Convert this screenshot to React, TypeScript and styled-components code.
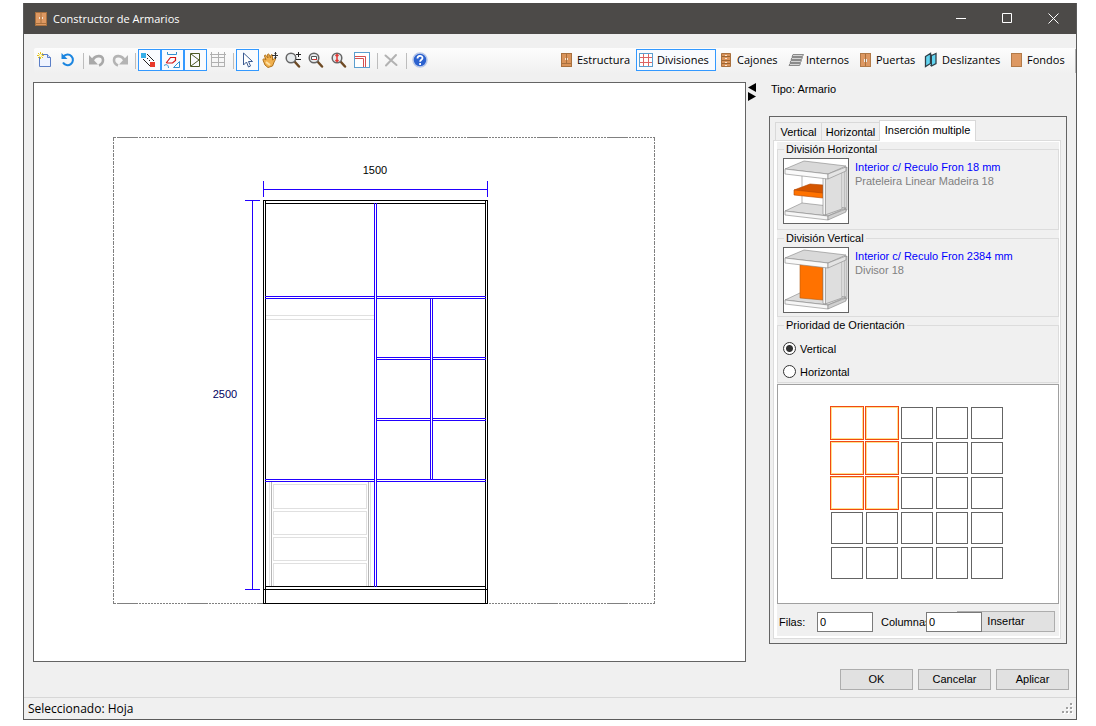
import React, { useState } from "react";
import styled, { createGlobalStyle, css } from "styled-components";

const uiFont = `"Open Sans", "Noto Sans", sans-serif`;
const formFont = `"Liberation Sans", Arial, sans-serif`;

const GlobalStyle = createGlobalStyle`
  *, *::before, *::after { box-sizing: border-box; }
  body { margin: 0; background: #fff; color: #000; font: 11px/14px ${formFont}; }
  button, input { font: inherit; color: inherit; margin: 0; }
`;

const Page = styled.div`
  display: flex;
  min-height: 100vh;
  padding: 3px 19px 6px 23px;
`;

const Window = styled.main`
  display: flex;
  flex: 1;
  flex-direction: column;
  min-width: 0;
  border: 1px solid #5b5b5b;
  border-top: 0;
  background: #f0f0f0;
`;

const TitleBar = styled.header`
  display: flex;
  align-items: center;
  height: 31px;
  padding-left: 11px;
  background: #4c4a48;
  color: #fff;
`;

const Title = styled.h1`
  flex: 1;
  margin: 0 0 0 6px;
  font: 400 11px/16px ${uiFont};
`;

const CaptionButton = styled.button`
  display: flex;
  align-items: center;
  justify-content: center;
  width: 46px;
  height: 31px;
  padding: 0;
  border: 0;
  background: transparent;
`;

const ToolStrip = styled.div`
  display: flex;
  justify-content: space-between;
  height: 25px;
  margin: 14px 0 9px 10px;
  padding-top: 1px;
  border-radius: 2px;
  background: linear-gradient(#fdfdfd, #f0f0f0);
`;

const ToolGroup = styled.div<{ $end?: boolean }>`
  display: flex;
  padding-right: ${(p) => (p.$end ? "3px" : "0")};
  border-right: ${(p) => (p.$end ? "1px solid #b4b4b4" : "0")};
`;

const ToolButton = styled.button<{ $active?: boolean; $width?: number }>`
  display: flex;
  align-items: center;
  gap: 2px;
  width: ${(p) => p.$width ?? 23}px;
  height: 22px;
  padding: 0 0 0 2px;
  border: 1px solid ${(p) => (p.$active ? "#3399ff" : "transparent")};
  background: ${(p) => (p.$active ? "#f9fbfe" : "transparent")};
  font: 400 11px/16px ${uiFont};
  white-space: nowrap;
  svg { flex: none; }
`;

const Separator = styled.span`
  width: 6px;
  height: 16px;
  margin-top: 4px;
  background: linear-gradient(#bdbdbd, #bdbdbd) 3px 0 / 1px 100% no-repeat;
`;

const Workspace = styled.div`
  display: grid;
  grid-template-columns: minmax(0, 1fr) 23px 298px;
  align-items: start;
  padding: 0 9px;
`;

const Canvas = styled.section`
  border: 1px solid #646464;
  background: #fff;
  svg { display: block; width: 100%; height: auto; }
`;

const Collapser = styled.div`
  display: flex;
  flex-direction: column;
  align-items: flex-start;
  padding: 1px 0 0 2px;
`;

const ArrowButton = styled.button`
  display: block;
  width: 9px;
  height: 9px;
  padding: 0;
  border: 0;
  background: transparent;
  svg { display: block; }
`;

const TypeLine = styled.p`
  height: 34px;
  margin: 0;
  padding-left: 2px;
`;

const Panel = styled.section`
  padding: 3px 5px 4px 3px;
  border: 1px solid #646464;
`;

const TabList = styled.div`
  display: flex;
  align-items: flex-end;
  padding-left: 2px;
`;

const Tab = styled.button<{ $active?: boolean; $width: number }>`
  width: ${(p) => p.$width}px;
  height: 18px;
  padding: 0;
  border: 1px solid #d9d9d9;
  border-right-width: 0;
  border-bottom: 0;
  background: #f0f0f0;
  white-space: nowrap;
  ${(p) =>
    p.$active &&
    css`
      z-index: 1;
      height: 21px;
      margin-bottom: -1px;
      padding: 0 0 2px;
      border-right-width: 1px;
      background: #fff;
    `}
`;

const TabPage = styled.div`
  padding: 1px 1px 2px 3px;
  border: 1px solid #dcdcdc;
  background: #fff;
`;

const TabContent = styled.div`
  display: flex;
  flex-direction: column;
  gap: 1px;
  background: #f0f0f0;
`;

const Group = styled.fieldset<{ $height: number }>`
  min-width: 0;
  height: ${(p) => p.$height}px;
  margin: 0;
  padding: 0 5px;
  border: 1px solid #dcdcdc;
  legend {
    height: 14px;
    margin-left: 1px;
    padding: 0 2px;
  }
`;

const Part = styled.div`
  display: flex;
  gap: 6px;
  padding-top: 2px;
`;

const Thumb = styled.svg`
  flex: none;
  width: 66px;
  height: 66px;
  border: 1px solid #646464;
  background: #fff;
`;

const PartText = styled.div`
  padding-top: 2px;
  white-space: nowrap;
`;

const PartName = styled.div`
  color: #0000ff;
`;

const PartModel = styled.div`
  color: #808080;
`;

const RadioLabel = styled.label`
  display: flex;
  align-items: center;
  gap: 4px;
  height: 23px;
  input {
    appearance: none;
    width: 13px;
    height: 13px;
    border: 1px solid #333;
    border-radius: 50%;
    background: #fff;
  }
  input:checked {
    background: radial-gradient(circle, #333 3px, #fff 4px);
  }
`;

const RadioStack = styled.div`
  padding-top: 5px;
`;

const Matrix = styled.div`
  display: grid;
  grid-template-columns: repeat(5, 32px);
  gap: 3px;
  justify-content: center;
  padding: 22px 2px 24px 0;
  border: 1px solid #a0a0a0;
  background: #fff;
`;

const Cell = styled.button<{ $on: boolean }>`
  height: 32px;
  padding: 0;
  border: 1px solid ${(p) => (p.$on ? "#ffe08a" : "#646464")};
  background: #fff;
  box-shadow: ${(p) => (p.$on ? "0 0 0 1px #f04a14" : "none")};
`;

const InsertRow = styled.div`
  display: flex;
  align-items: center;
  height: 31px;
  padding: 2px 0 0 2px;
`;

const FieldLabel = styled.label<{ $width: number }>`
  flex: none;
  width: ${(p) => p.$width}px;
  white-space: nowrap;
`;

const NumberBox = styled.input`
  z-index: 1;
  flex: none;
  width: 56px;
  height: 20px;
  margin-right: 8px;
  padding: 0 2px;
  border: 1px solid #7a7a7a;
  background: #fff;
  &:last-of-type { margin-right: 0; }
`;

const PushButton = styled.button<{ $insert?: boolean }>`
  width: ${(p) => (p.$insert ? 98 : 73)}px;
  height: 21px;
  margin-left: ${(p) => (p.$insert ? "-25px" : "0")};
  padding: 0 0 2px;
  border: 1px solid #adadad;
  background: #e1e1e1;
`;

const DialogButtons = styled.footer`
  display: flex;
  flex: 1;
  gap: 5px;
  align-items: flex-start;
  justify-content: flex-end;
  padding: 7px 7px;
`;

const StatusBar = styled.div`
  display: flex;
  align-items: center;
  justify-content: space-between;
  height: 22px;
  padding: 0 2px 0 4px;
  border-top: 1px solid #d7d7d7;
  font: 400 12px/16px ${uiFont};
`;

type IconProps = { children: React.ReactNode };
const Icon = ({ children }: IconProps) => (
  <svg width="16" height="16" viewBox="0 0 16 16" fill="none" aria-hidden="true">
    {children}
  </svg>
);

const NewIcon = () => (
  <Icon>
    <path d="M2.500 2.500h8l3 3v9h-11z" fill="#eff4ff" stroke="#5b7fc7" />
    <path d="M10.500 2.500v3h3" fill="#cfdcf5" stroke="#5b7fc7" />
    <path d="M3.500 0v7M0 3.500h7M1 1l5 5M6 1L1 6" stroke="#e6c419" />
    <circle cx="3.500" cy="3.500" r="1.500" fill="#fffbd0" />
  </Icon>
);

const RefreshIcon = () => (
  <Icon>
    <path d="M3.500 4.500A5.300 5.300 0 1 1 3 10.500" stroke="#1c86e0" strokeWidth="2" />
    <path d="M1.500 1v6h6z" fill="#1c86e0" />
  </Icon>
);

const UndoIcon = () => (
  <Icon>
    <path d="M3.500 8.500C5.500 3.500 14 2 14 8c0 2.500-1.500 4.500-4 5.500" stroke="#a9a9a9" strokeWidth="2.600" />
    <path d="M0 3v9.500h9z" fill="#a9a9a9" />
  </Icon>
);

const RedoIcon = () => (
  <Icon>
    <path d="M12.500 8.500C10.500 3.500 2 2 2 8c0 2.500 1.500 4.500 4 5.500" stroke="#b4b4b4" strokeWidth="2.600" />
    <path d="M16 3v9.500H7z" fill="#b4b4b4" />
  </Icon>
);

const linkDots = [0, 1, 2, 3, 4, 5, 6];
const LinkIcon = () => (
  <Icon>
    <g fill="#222" shapeRendering="crispEdges">
      {linkDots.map((i) => (
        <g key={i}>
          <rect x={6 + i} y={2 + i} width="1" height="1" />
          <rect x={2 + i} y={7 + i} width="1" height="1" />
        </g>
      ))}
      <rect x="6" y="6" width="1" height="1" />
      <rect x="8" y="8" width="1" height="1" />
    </g>
    <rect x="0" y="1" width="5" height="5" fill="#35aee8" />
    <rect x="9" y="10" width="5" height="5" fill="#e8382c" />
  </Icon>
);

const ShapesIcon = () => (
  <Icon>
    <path d="M3.500 0v2.500h9V0M0 13.500c3-2 4.500 0 4.500 2.500M9.500 15.500l6-6v6z" stroke="#2f8fd0" />
    <path d="M2.500 10.500l4-5h5v3l-3 2.500H3z" stroke="#d31414" strokeWidth="1.200" />
  </Icon>
);

const DoorIcon = () => (
  <Icon>
    <path d="M3.500 1.500h9v13h-9zM4 2l8 6-8 6" stroke="#4c5a24" />
  </Icon>
);

const TableIcon = () => (
  <Icon>
    <path d="M0 2.500h16M1.500 0v15M8.500 0v15M14.500 0v15M1 5.500h14M1 10.500h14M1 14.500h14" stroke="#b0b0b0" />
  </Icon>
);

const PointerIcon = () => (
  <Icon>
    <path d="M4.500 1v12l3-3 2 5 2-1-2-4.500h4z" fill="#fff" stroke="#3b5b92" />
  </Icon>
);

const HandIcon = () => (
  <Icon>
    <path
      d="M1 8c0-2 2-1 3 0L2.500 4c0-1.500 1.500-1 2 0L6 6 5.500 2.500C6 1.500 7 2 7.500 3L8.500 6l.500-3c1-1 2 0 1.500 1.500V8l2-1.500c1.500 0 1 1.500 0 2.500L10.500 14 6 15.500 3 13z"
      fill="#f0b04e"
      stroke="#b0721c"
    />
    <path d="M4 10l4 3" stroke="#ffe0a0" strokeWidth="2" />
    <path d="M13.500 0v7M10 3.500h6M12.500 1.500h2M12.500 5.500h2" stroke="#333" />
  </Icon>
);

const Magnifier = ({ children }: IconProps) => (
  <Icon>
    <path d="M9.500 9.500l4.500 5" stroke="#6e4a24" strokeWidth="2.500" strokeLinecap="round" />
    <circle cx="6" cy="6" r="4.800" fill="#e6eaec" stroke="#666" strokeWidth="1.500" />
    {children}
  </Icon>
);

const FrameIcon = () => (
  <Icon>
    <rect x=".500" y=".500" width="15" height="15" fill="#fff" stroke="#5b9ecf" />
    <path d="M1 4.500h10.500V15M1 6.500h8.500V15" stroke="#d65050" />
  </Icon>
);

const DeleteIcon = () => (
  <Icon>
    <path d="M2.500 3.500l11 9.500M13 3L3 13.500" stroke="#b2b2b2" strokeWidth="2" strokeLinecap="round" />
  </Icon>
);

const HelpIcon = () => (
  <Icon>
    <circle cx="8" cy="8" r="7" fill="#2c62cf" stroke="#b9c8e8" strokeWidth="1.500" />
    <path d="M5.500 6.500c0-3.500 5-3.300 5-.500 0 1.700-2.400 1.800-2.400 3.700M8.100 11v2" stroke="#fff" strokeWidth="1.800" />
  </Icon>
);

const WardrobeIcon = () => (
  <Icon>
    <rect x="2.500" y="1.500" width="10" height="13" fill="#d9935a" stroke="#a8703e" />
    <path d="M7.500 2v9M3 11.500h9" stroke="#a8703e" />
    <path d="M6.500 6v2M8.500 6v2" stroke="#f6e3d0" />
  </Icon>
);

const DivisionIcon = () => (
  <Icon>
    <rect x=".500" y="1.500" width="13" height="13" fill="#fff" stroke="#5b9ecf" />
    <path d="M4.500 2v12M9.500 2v12M1 5.500h12M1 10.500h12" stroke="#dc6464" />
  </Icon>
);

const DrawersIcon = () => (
  <Icon>
    <path d="M2.500 1.500h9v13h-9z" fill="#d9935a" stroke="#a8703e" />
    <path d="M3 4.500h8M3 8.500h8M3 11.500h8" stroke="#9c6430" />
    <path d="M6 3.500h2M6 6.500h2M6 10.500h2M6 13.500h2" stroke="#f6e3d0" />
  </Icon>
);

const ShelvesIcon = () => (
  <Icon>
    <path d="M5 2.500h10.500l-1 2H4zM4 5.500h10.500l-1 2H3zM3 8.500h10.500l-1 2H2zM2 11.500h10.500l-1 2H1z" fill="#d4d4d4" stroke="#808080" strokeWidth=".900" />
  </Icon>
);

const DoorsIcon = () => (
  <Icon>
    <rect x="2.500" y="1.500" width="10" height="13" fill="#dd9862" stroke="#b27a48" />
    <path d="M7.500 2v12" stroke="#a8703e" />
    <path d="M6.500 7v3M8.500 7v3" stroke="#e8eef2" />
  </Icon>
);

const SlidingIcon = () => (
  <Icon>
    <path d="M1.500 4.500l5-3v10l-5 3zM6.500 2.500l1 1 4.500-2v10l-4.500 2.500-1-1" fill="#62d4f0" stroke="#2f3f48" strokeWidth="1.300" />
    <path d="M7.500 3v10" stroke="#2f3f48" />
  </Icon>
);

const BackIcon = () => (
  <Icon>
    <rect x="2.500" y="1.500" width="10" height="13" fill="#dd9862" stroke="#b27a48" />
  </Icon>
);

type LineProps = { at: number; from: number; to: number; color: string };
const HLine = ({ at, from, to, color }: LineProps) => (
  <rect x={from} y={at} width={to - from + 1} height="1" fill={color} />
);
const VLine = ({ at, from, to, color }: LineProps) => (
  <rect x={at} y={from} width="1" height={to - from + 1} fill={color} />
);

const BLUE = "#2200ff";
const BLACK = "#000";
const LIGHT = "#e0e0e0";
const MID = "#b6b6b6";

const horizontalDash = `21 1 ${Array(16).fill("2 1").join(" ")}`;

const WardrobeDrawing = () => (
  <svg viewBox="34 83 711 578" shapeRendering="crispEdges" role="img" aria-label="Armario 1500 x 2500">
    <g stroke="#808080" fill="none">
      <path d="M113 137.500H655M113 603.500H655" strokeDasharray={horizontalDash} strokeDashoffset="66" />
      <path d="M113.500 137V604M654.500 137V604" strokeDasharray="4 1 2 1" />
    </g>

    <HLine at={189} from={263} to={487} color={BLUE} />
    <VLine at={263} from={181} to={196} color={BLUE} />
    <VLine at={487} from={181} to={196} color={BLUE} />
    <VLine at={252} from={200} to={589} color={BLUE} />
    <HLine at={200} from={245} to={259} color={BLUE} />
    <HLine at={589} from={245} to={259} color={BLUE} />

    {[315, 319].map((y) => (
      <HLine key={y} at={y} from={266} to={373} color={LIGHT} />
    ))}
    {[269, 370].map((x) => (
      <VLine key={x} at={x} from={482} to={585} color={LIGHT} />
    ))}
    {[271, 368].map((x) => (
      <VLine key={x} at={x} from={482} to={585} color={MID} />
    ))}
    {[[484, 508], [511, 534], [537, 560], [563, 586]].map(([top, bottom]) => (
      <g key={top}>
        <HLine at={top} from={273} to={366} color={LIGHT} />
        <HLine at={bottom} from={273} to={366} color={LIGHT} />
        <VLine at={273} from={top} to={bottom} color={LIGHT} />
        <VLine at={366} from={top} to={bottom} color={LIGHT} />
      </g>
    ))}

    {[263, 265, 485, 487].map((x) => (
      <VLine key={x} at={x} from={200} to={603} color={BLACK} />
    ))}
    {[200, 589, 603].map((y) => (
      <HLine key={y} at={y} from={263} to={487} color={BLACK} />
    ))}
    {[203, 586].map((y) => (
      <HLine key={y} at={y} from={265} to={485} color={BLACK} />
    ))}

    {[374, 376].map((x) => (
      <VLine key={x} at={x} from={203} to={586} color={BLUE} />
    ))}
    {[296, 298, 479, 481].map((y) => (
      <g key={y}>
        <HLine at={y} from={265} to={374} color={BLUE} />
        <HLine at={y} from={376} to={485} color={BLUE} />
      </g>
    ))}
    {[357, 359, 418, 420].map((y) => (
      <g key={y}>
        <HLine at={y} from={376} to={430} color={BLUE} />
        <HLine at={y} from={432} to={485} color={BLUE} />
      </g>
    ))}
    {[430, 432].map((x) => (
      <VLine key={x} at={x} from={298} to={479} color={BLUE} />
    ))}

    <g fontFamily="Liberation Sans, Arial, sans-serif" fontSize="11" textAnchor="middle">
      <text x="375" y="174">1500</text>
      <text x="225" y="398" fill="#000060">2500</text>
    </g>
  </svg>
);

const CabinetThumb = ({ kind }: { kind: "shelf" | "divider" }) => (
  <Thumb viewBox="1 1 64 64" aria-hidden="true">
    <g stroke="#858585" strokeWidth="0.600" strokeLinejoin="round">
      <path d="M61 10l3-1v43l-3 1z" fill="#d8d8d8" />
      <path d="M2 53l17-8 44 5-18 8z" fill="#dcdcdc" />
      <path d="M2 53l43 5v4L2 57z" fill="#f6f6f6" />
      <path d="M45 58l18-7v3l-18 8z" fill="#d0d0d0" />
      <path d="M19 17v28" />
      {kind === "shelf" ? (
        <g stroke="#b34700">
          <path d="M11 32l16-6 13 1v9z" fill="#d45500" />
          <path d="M11 32l29 3v5l-29-3z" fill="#ff7200" />
        </g>
      ) : (
        <path d="M17 17l23 3v33l-23-2z" fill="#ff7200" stroke="#b35a10" />
      )}
      <path d="M42 19l17-6v38l-17 6z" fill="#dedede" />
      <path d="M40 18h2.500v39l-2.500-.500z" fill="#f6f6f6" />
      <path d="M2 11l19-8 42 5-18 8z" fill="#d9d9d9" />
      <path d="M2 11l43 5v5L2 16z" fill="#fafafa" />
      <path d="M45 16l18-7v4l-18 8z" fill="#e4e4e4" />
    </g>
  </Thumb>
);

const sections = [
  { name: "Estructura", width: 80, icon: <WardrobeIcon /> },
  { name: "Divisiones", width: 80, icon: <DivisionIcon /> },
  { name: "Cajones", width: 69, icon: <DrawersIcon /> },
  { name: "Internos", width: 70, icon: <ShelvesIcon /> },
  { name: "Puertas", width: 66, icon: <DoorsIcon /> },
  { name: "Deslizantes", width: 85, icon: <SlidingIcon /> },
  { name: "Fondos", width: 66, icon: <BackIcon /> },
];

const tabs = [
  { name: "Vertical", width: 46 },
  { name: "Horizontal", width: 58 },
  { name: "Inserción multiple", width: 97 },
];

export default function App() {
  const [section, setSection] = useState("Divisiones");
  const [tab, setTab] = useState("Inserción multiple");
  const [size, setSize] = useState({ rows: 3, columns: 2 });

  return (
    <>
      <GlobalStyle />
      <Page>
        <Window>
          <TitleBar>
            <svg width="12" height="14" viewBox="0 0 12 14" fill="none" aria-hidden="true">
              <rect x=".500" y=".500" width="11" height="13" fill="#dd9862" stroke="#a8703e" />
              <path d="M6 1v10M1 11.500h10" stroke="#a8703e" />
              <path d="M4.500 5v2M7.500 5v2" stroke="#f6e3d0" />
            </svg>
            <Title>Constructor de Armarios</Title>
            <CaptionButton aria-label="Minimizar">
              <svg width="11" height="11" viewBox="0 0 11 11"><path d="M0 5.500h10" stroke="#fff" /></svg>
            </CaptionButton>
            <CaptionButton aria-label="Maximizar">
              <svg width="11" height="11" viewBox="0 0 11 11" fill="none"><path d="M.500.500h9v9h-9z" stroke="#fff" /></svg>
            </CaptionButton>
            <CaptionButton aria-label="Cerrar">
              <svg width="11" height="11" viewBox="0 0 11 11"><path d="M.500.500l10 10M10.500.500l-10 10" stroke="#fff" /></svg>
            </CaptionButton>
          </TitleBar>

          <ToolStrip>
            <ToolGroup>
              <ToolButton aria-label="Nuevo"><NewIcon /></ToolButton>
              <ToolButton aria-label="Recargar"><RefreshIcon /></ToolButton>
              <Separator />
              <ToolButton aria-label="Deshacer"><UndoIcon /></ToolButton>
              <ToolButton aria-label="Rehacer"><RedoIcon /></ToolButton>
              <Separator />
              <ToolButton $active aria-label="Enlaces"><LinkIcon /></ToolButton>
              <ToolButton $active aria-label="Formas"><ShapesIcon /></ToolButton>
              <ToolButton $active aria-label="Ver puertas"><DoorIcon /></ToolButton>
              <ToolButton aria-label="Cotas"><TableIcon /></ToolButton>
              <Separator />
              <ToolButton $active aria-label="Seleccionar"><PointerIcon /></ToolButton>
              <ToolButton aria-label="Mover"><HandIcon /></ToolButton>
              <ToolButton aria-label="Zoom">
                <Magnifier><path d="M11 2.500h5M13.500 0v5M11 7.500h5" stroke="#222" /></Magnifier>
              </ToolButton>
              <ToolButton aria-label="Zoom ventana">
                <Magnifier><path d="M3.500 4.500h5v3h-5z" fill="#fff" stroke="#555" /><path d="M5 7.500h4" stroke="#d33" /></Magnifier>
              </ToolButton>
              <ToolButton aria-label="Zoom total">
                <Magnifier><path d="M6 3v6M4.500 4L6 2.500 7.500 4M4.500 8L6 9.500 7.500 8" stroke="#e53935" strokeWidth="1.500" /></Magnifier>
              </ToolButton>
              <ToolButton aria-label="Marco"><FrameIcon /></ToolButton>
              <Separator />
              <ToolButton aria-label="Eliminar"><DeleteIcon /></ToolButton>
              <Separator />
              <ToolButton aria-label="Ayuda"><HelpIcon /></ToolButton>
            </ToolGroup>
            <ToolGroup $end>
              {sections.map((s) => (
                <ToolButton key={s.name} $width={s.width} $active={s.name === section} onClick={() => setSection(s.name)}>
                  {s.icon}
                  {s.name}
                </ToolButton>
              ))}
            </ToolGroup>
          </ToolStrip>

          <Workspace>
            <Canvas>
              <WardrobeDrawing />
            </Canvas>
            <Collapser>
              <ArrowButton aria-label="Mostrar panel">
                <svg width="9" height="9" viewBox="0 0 9 9"><path d="M0 4.500L8 0v9z" /></svg>
              </ArrowButton>
              <ArrowButton aria-label="Ocultar panel">
                <svg width="9" height="9" viewBox="0 0 9 9"><path d="M8 4.500L0 0v9z" /></svg>
              </ArrowButton>
            </Collapser>
            <div>
              <TypeLine>Tipo: Armario</TypeLine>
              <Panel>
                <TabList role="tablist">
                  {tabs.map((t) => (
                    <Tab
                      key={t.name}
                      role="tab"
                      aria-selected={t.name === tab}
                      $active={t.name === tab}
                      $width={t.width}
                      onClick={() => setTab(t.name)}
                    >
                      {t.name}
                    </Tab>
                  ))}
                </TabList>
                <TabPage>
                  <TabContent>
                    <Group $height={88}>
                      <legend>División Horizontal</legend>
                      <Part>
                        <CabinetThumb kind="shelf" />
                        <PartText>
                          <PartName>Interior c/ Reculo Fron 18 mm</PartName>
                          <PartModel>Prateleira Linear Madeira 18</PartModel>
                        </PartText>
                      </Part>
                    </Group>
                    <Group $height={86}>
                      <legend>División Vertical</legend>
                      <Part>
                        <CabinetThumb kind="divider" />
                        <PartText>
                          <PartName>Interior c/ Reculo Fron 2384 mm</PartName>
                          <PartModel>Divisor 18</PartModel>
                        </PartText>
                      </Part>
                    </Group>
                    <Group $height={65}>
                      <legend>Prioridad de Orientación</legend>
                      <RadioStack>
                        <RadioLabel><input type="radio" name="orientation" defaultChecked />Vertical</RadioLabel>
                        <RadioLabel><input type="radio" name="orientation" />Horizontal</RadioLabel>
                      </RadioStack>
                    </Group>
                    <Matrix>
                      {Array.from({ length: 25 }, (_, i) => {
                        const row = Math.floor(i / 5) + 1;
                        const column = (i % 5) + 1;
                        return (
                          <Cell
                            key={i}
                            aria-label={`${row} x ${column}`}
                            $on={row <= size.rows && column <= size.columns}
                            onClick={() => setSize({ rows: row, columns: column })}
                          />
                        );
                      })}
                    </Matrix>
                    <InsertRow>
                      <FieldLabel $width={38} htmlFor="rows">Filas:</FieldLabel>
                      <NumberBox id="rows" defaultValue="0" />
                      <FieldLabel $width={45} htmlFor="columns">Columnas:</FieldLabel>
                      <NumberBox id="columns" defaultValue="0" />
                      <PushButton $insert>Insertar</PushButton>
                    </InsertRow>
                  </TabContent>
                </TabPage>
              </Panel>
            </div>
          </Workspace>

          <DialogButtons>
            <PushButton>OK</PushButton>
            <PushButton>Cancelar</PushButton>
            <PushButton>Aplicar</PushButton>
          </DialogButtons>

          <StatusBar>
            Seleccionado: Hoja
            <svg width="12" height="12" viewBox="0 0 12 12" aria-hidden="true">
              {[[8, 0], [4, 4], [8, 4], [0, 8], [4, 8], [8, 8]].map(([x, y]) => (
                <g key={`${x}-${y}`}>
                  <rect x={x + 1} y={y + 1} width="2" height="2" fill="#fff" />
                  <rect x={x} y={y} width="2" height="2" fill="#a0a0a0" />
                </g>
              ))}
            </svg>
          </StatusBar>
        </Window>
      </Page>
    </>
  );
}
